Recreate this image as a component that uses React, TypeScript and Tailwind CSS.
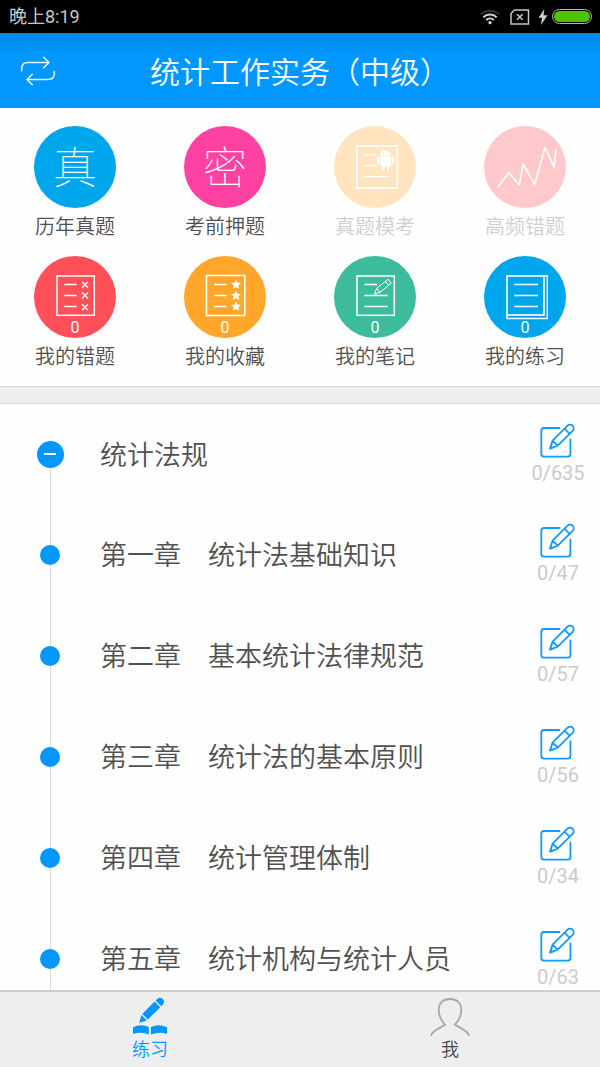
import { clsx } from "clsx";
import type { ReactNode } from "react";

interface Shortcut {
  label: string;
  color: string;
  icon: ReactNode;
  count?: number;
  disabled?: boolean;
}

interface Chapter {
  title: string;
  total: number;
}

const chapters: Chapter[] = [
  { title: "统计法规", total: 635 },
  { title: "第一章　统计法基础知识", total: 47 },
  { title: "第二章　基本统计法律规范", total: 57 },
  { title: "第三章　统计法的基本原则", total: 56 },
  { title: "第四章　统计管理体制", total: 34 },
  { title: "第五章　统计机构与统计人员", total: 63 },
];

const STAR =
  "M0-5 L1.5-1.8 L5-1.4 L2.4 1 L3.1 4.5 L0 2.8 L-3.1 4.5 L-2.4 1 L-5-1.4 L-1.5-1.8 Z";

function Glyph({ children }: { children: ReactNode }) {
  return (
    <svg
      viewBox="0 0 82 82"
      className="size-full"
      fill="none"
      stroke="white"
      strokeWidth="1.3"
      aria-hidden="true"
    >
      {children}
    </svg>
  );
}

function Character({ children }: { children: string }) {
  return (
    <span className="pt-1 text-[44px] leading-none font-thin">{children}</span>
  );
}

const shortcuts: Shortcut[] = [
  {
    label: "历年真题",
    color: "bg-[#00a6ec]",
    icon: <Character>真</Character>,
  },
  {
    label: "考前押题",
    color: "bg-[#ff42a1]",
    icon: <Character>密</Character>,
  },
  {
    label: "真题模考",
    color: "bg-[#ffe4bf]",
    disabled: true,
    icon: (
      <Glyph>
        <rect x="22.7" y="20" width="40.6" height="42" strokeWidth="1.7" />
        <path d="M30.3 28.7H42.5M30.3 39.7H42.5M30.3 50.7H55.5" />
        <g fill="white" stroke="none">
          <path d="M46 29.5a5.4 4.9 0 0 1 10.8 0z" />
          <path d="M46 30.3h11v9q0 1-1 1h-1v3.4a1 1 0 0 1-2 0v-3.4h-2.6v3.4a1 1 0 0 1-2 0v-3.4H47q-1 0-1-1z" />
          <rect x="43" y="30.5" width="2.1" height="7.5" rx="1" />
          <rect x="57.8" y="30.5" width="2.1" height="7.5" rx="1" />
        </g>
        <path d="M48.3 24.2l1 1.6M54.5 24.2l-1 1.6" strokeWidth="0.6" />
        <path d="M49.3 27.2h.8M52.8 27.2h.8" stroke="#ffe4bf" strokeWidth="0.8" />
      </Glyph>
    ),
  },
  {
    label: "高频错题",
    color: "bg-[#ffc9cc]",
    disabled: true,
    icon: (
      <Glyph>
        <path
          d="M7.5 46.7H76"
          strokeWidth="1"
          strokeDasharray="1 2"
          opacity="0.35"
        />
        <path
          d="M14 61L24.7 46.7L35.3 58.7L39 38L50.7 58.3L61 21.5L70 41L72 23.7"
          strokeWidth="1.6"
          strokeLinecap="round"
          strokeLinejoin="round"
        />
      </Glyph>
    ),
  },
  {
    label: "我的错题",
    color: "bg-[#ff4f59]",
    count: 0,
    icon: (
      <Glyph>
        <rect x="23" y="20" width="37.3" height="39.3" strokeWidth="1.5" />
        <path d="M30.3 28.5H42.7M30.3 39.5H42.7M30.3 50.5H42.7" />
        <path d="M48 25.7l6 6m0-6l-6 6M48 36.5l6 6m0-6l-6 6M48 48.3l6 6m0-6l-6 6" />
      </Glyph>
    ),
  },
  {
    label: "我的收藏",
    color: "bg-[#ffa62b]",
    count: 0,
    icon: (
      <Glyph>
        <rect x="22.5" y="19.5" width="38.3" height="40" strokeWidth="1.5" />
        <path d="M30.3 28.5H42.7M30.3 39.5H42.7M30.3 50.5H42.7" />
        <g fill="white" stroke="none">
          <path d={STAR} transform="translate(52 28.5)" />
          <path d={STAR} transform="translate(52 39.5)" />
          <path d={STAR} transform="translate(52 50.3)" />
        </g>
      </Glyph>
    ),
  },
  {
    label: "我的笔记",
    color: "bg-[#3cbc9c]",
    count: 0,
    icon: (
      <Glyph>
        <rect x="23" y="20" width="37.3" height="39.3" strokeWidth="1.5" />
        <path d="M30.3 28.5H43M30.3 39.5H53.7M30.3 50.5H53.7" />
        <path
          d="M40.5 38L42.7 32.3L54 23.3L57.3 27.2L46.2 36.3ZM42.7 32.3L46.2 36.3M51.3 25.4L54.7 29.3"
          strokeWidth="1"
          strokeLinejoin="round"
        />
      </Glyph>
    ),
  },
  {
    label: "我的练习",
    color: "bg-[#00a6ec]",
    count: 0,
    icon: (
      <Glyph>
        <rect x="23" y="20" width="37" height="39" strokeWidth="1.6" />
        <path d="M60 20H63.3V62.5H23V59" strokeWidth="1.4" />
        <path d="M30.3 28.5H54M30.3 39.5H54M30.3 50.5H54" />
      </Glyph>
    ),
  },
];

function StatusBar() {
  return (
    <div className="flex h-[33px] items-center justify-between bg-black pr-2 pl-[9px] text-lg leading-none text-[#c8c8c8]">
      <span className="pt-px">晚上8:19</span>
      <div className="flex items-center">
        <svg
          viewBox="0 0 20 16"
          className="mr-[10px] h-4 w-5"
          fill="none"
          strokeWidth="2"
          aria-hidden="true"
        >
          <path d="M0.8 5.3a13.5 13.5 0 0 1 18.4 0" stroke="#333" />
          <path
            d="M3.4 8.2a9.6 9.6 0 0 1 13.2 0M6.2 11a5.6 5.6 0 0 1 7.6 0"
            stroke="#d8d8d8"
          />
          <circle cx="10" cy="13.7" r="1.6" fill="#d8d8d8" />
        </svg>
        <svg
          viewBox="0 0 20 16"
          className="mr-2 h-4 w-5"
          fill="none"
          stroke="#c4c4c4"
          strokeWidth="1.5"
          aria-hidden="true"
        >
          <path d="M4.5 1H18.5V15H1V4.5Z" />
          <path d="M7 5.2l5.6 5.6M12.6 5.2L7 10.8" strokeWidth="1.6" />
        </svg>
        <svg viewBox="0 0 10 16" className="mr-1 h-4 w-[10px]" aria-hidden="true">
          <path d="M6.3 0L0.5 8.8H4L3 16L9.5 6.3H5.6Z" fill="#d0d0d0" />
        </svg>
        <div className="h-[15px] w-10 rounded-full border border-[#b5b5b5] p-px">
          <div className="h-full rounded-full bg-[#4cc400]" />
        </div>
      </div>
    </div>
  );
}

function Header() {
  return (
    <header className="grid h-[75px] grid-cols-[1fr_auto_1fr] items-center bg-[#0097ff] bg-linear-to-b from-[#0088e6] to-[#0097ff] to-30% text-white">
      <button type="button" aria-label="切换科目" className="ml-5 w-9">
        <svg
          viewBox="0 0 36 30"
          className="h-[30px] w-9"
          fill="none"
          stroke="#e3f3ff"
          strokeWidth="1.6"
          strokeLinecap="round"
          strokeLinejoin="round"
          aria-hidden="true"
        >
          <path d="M1.7 14.7V12.5Q1.7 6.5 8 6.5H29M23.7 1.3L29 6.5L23.7 11.7" />
          <path d="M34.3 15.5V17.5Q34.3 23.5 28 23.5H7M12.3 18.3L7 23.5L12.3 28.7" />
        </svg>
      </button>
      <h1 className="pt-1 text-3xl font-[350]">统计工作实务（中级）</h1>
    </header>
  );
}

function ShortcutGrid() {
  return (
    <section className="grid grid-cols-4 gap-y-4 pt-[18px] pb-4">
      {shortcuts.map((item) => (
        <button
          key={item.label}
          type="button"
          disabled={item.disabled}
          className={clsx(
            "flex flex-col items-center",
            item.disabled ? "text-[#cfcfcf]" : "text-[#505050]",
          )}
        >
          <span
            className={clsx(
              "relative flex size-[82px] items-center justify-center rounded-full text-white",
              item.color,
            )}
          >
            {item.icon}
            {item.count !== undefined && (
              <span className="absolute inset-x-0 bottom-0 text-base leading-5">
                {item.count}
              </span>
            )}
          </span>
          <span className="pt-1.5 text-xl leading-[26px] font-[350]">
            {item.label}
          </span>
        </button>
      ))}
    </section>
  );
}

function EditIcon() {
  return (
    <svg
      viewBox="0 0 38 36"
      className="h-9 w-[38px]"
      fill="none"
      stroke="#0f9bff"
      strokeWidth="1.8"
      strokeLinecap="round"
      strokeLinejoin="round"
      aria-hidden="true"
    >
      <path d="M20.500 6H5Q2.300 6 2.300 8.700V32Q2.300 34.700 5 34.700H28.700Q31.400 34.700 31.400 32V17.500" />
      <path d="M11 26.600L13.600 18.600L28.500 3.700a3.600 3.600 0 0 1 5.100 5.100L18.700 23.700ZM13.600 18.600L18.700 23.700M25.500 6.700L30.600 11.800" />
      <path d="M11.600 25l1.200 1.200" />
    </svg>
  );
}

function ChapterRow({ chapter, root }: { chapter: Chapter; root: boolean }) {
  return (
    <li className={clsx("flex", root ? "h-[100px]" : "h-[101px]")}>
      <div className="flex w-[100px] flex-col items-center">
        <span className={clsx("w-px flex-1", !root && "bg-[#dcdcdc]")} />
        {root ? (
          <button
            type="button"
            aria-label="收起"
            className="flex size-[27px] items-center justify-center rounded-full bg-[#0097ff]"
          >
            <span className="h-[2px] w-3 bg-white" />
          </button>
        ) : (
          <span className="size-5 rounded-full bg-[#0097ff]" />
        )}
        <span className="w-px flex-1 bg-[#dcdcdc]" />
      </div>
      <p className="flex-1 self-center pt-[3px] text-[27px] leading-9 font-[350] text-[#505050]">
        {chapter.title}
      </p>
      <a
        href="#"
        className="flex w-[84px] flex-col items-center pt-[18px] text-xl leading-[30px] text-[#cbcbcb]"
      >
        <EditIcon />
        <span>0/{chapter.total}</span>
      </a>
    </li>
  );
}

function BottomNav() {
  return (
    <nav className="grid h-[77px] shrink-0 grid-cols-2 border-t-2 border-[#cdcdcd] bg-[#eee] text-lg leading-7 font-[350]">
      <a href="#" className="flex flex-col items-center pt-1 text-[#0097ff]">
        <svg
          viewBox="0 0 36 40"
          className="h-10 w-9"
          fill="currentColor"
          aria-hidden="true"
        >
          <path d="M7.2 26.8L9.4 19L14.9 24.5Z" />
          <path d="M10.3 17.9L22.6 5.6L28.2 11.2L15.9 23.5Z" />
          <path d="M23.6 4.6L25.5 2.7a4 4 0 0 1 5.6 5.6L29.2 10.2Z" />
          <path d="M1 31.2Q9 27.4 16.8 31V38.4Q9 35.2 1 38Z" />
          <path d="M35 31.2Q27 27.4 18.9 31V38.4Q27 35.2 35 38Z" />
        </svg>
        练习
      </a>
      <a href="#" className="flex flex-col items-center pt-1 text-[#484848]">
        <svg
          viewBox="0 0 40 40"
          className="size-10"
          fill="none"
          stroke="#a9a9a9"
          strokeWidth="1.8"
          strokeLinecap="round"
          aria-hidden="true"
        >
          <path d="M1.2 39.3C2 35 9.5 32 15.2 28.8C11.5 25 8.7 20 8.7 14C8.7 7 13 3 20 3S31.3 7 31.3 14C31.3 20 28.5 25 24.8 28.8C30.5 32 38 35 38.8 39.3" />
        </svg>
        我
      </a>
    </nav>
  );
}

export default function App() {
  return (
    <div className="flex h-screen flex-col bg-[#fefefe] font-['Roboto','Noto_Sans_CJK_SC',sans-serif]">
      <StatusBar />
      <Header />
      <main className="min-h-0 flex-1 overflow-y-auto [scrollbar-width:none]">
        <ShortcutGrid />
        <div className="h-[18px] border-y border-[#d9d9d9] bg-[#eee]" />
        <ul>
          {chapters.map((chapter, index) => (
            <ChapterRow
              key={chapter.title}
              chapter={chapter}
              root={index === 0}
            />
          ))}
        </ul>
      </main>
      <BottomNav />
    </div>
  );
}
